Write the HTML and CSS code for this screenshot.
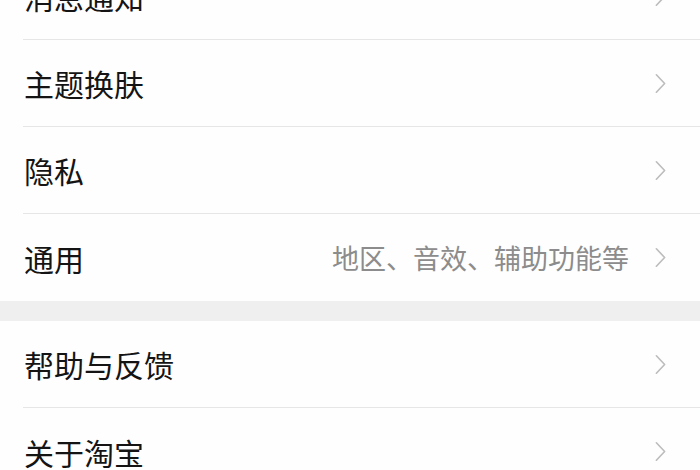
FILE: index.html
```html
<!DOCTYPE html>
<html lang="zh-CN">
<head>
<meta charset="utf-8">
<link rel="stylesheet" href="styles.css">
</head>
<body>
<div class="page">
  <ul class="group">
    <li class="row"><span class="label">消息通知</span><span class="right"><svg class="chev" viewBox="0 0 12 22"><polyline points="1.5,1.5 10.5,11 1.5,20.5"/></svg></span></li>
    <li class="row"><span class="label">主题换肤</span><span class="right"><svg class="chev" viewBox="0 0 12 22"><polyline points="1.5,1.5 10.5,11 1.5,20.5"/></svg></span></li>
    <li class="row"><span class="label">隐私</span><span class="right"><svg class="chev" viewBox="0 0 12 22"><polyline points="1.5,1.5 10.5,11 1.5,20.5"/></svg></span></li>
    <li class="row"><span class="label">通用</span><span class="right"><span class="hint">地区、音效、辅助功能等</span><svg class="chev" viewBox="0 0 12 22"><polyline points="1.5,1.5 10.5,11 1.5,20.5"/></svg></span></li>
  </ul>
  <div class="gap"></div>
  <ul class="group">
    <li class="row"><span class="label">帮助与反馈</span><span class="right"><svg class="chev" viewBox="0 0 12 22"><polyline points="1.5,1.5 10.5,11 1.5,20.5"/></svg></span></li>
    <li class="row"><span class="label">关于淘宝</span><span class="right"><svg class="chev" viewBox="0 0 12 22"><polyline points="1.5,1.5 10.5,11 1.5,20.5"/></svg></span></li>
  </ul>
</div>
</body>
</html>
```

FILE: styles.css
```css
html, body {
  margin: 0;
  padding: 0;
  background: #fefefe;
  overflow: hidden;
}
.page {
  width: 700px;
  margin-top: -47px;
  font-family: "Noto Sans CJK SC", "Noto Sans", sans-serif;
}
.group {
  list-style: none;
  margin: 0;
  padding: 0;
  background: #fefefe;
}
.row {
  display: flex;
  align-items: center;
  justify-content: space-between;
  height: 86px;
  margin-left: 23px;
  padding-right: 34px;
  border-bottom: 1px solid #e6e6e6;
}
.row:last-child {
  border-bottom: none;
  height: 87px;
}
.label {
  font-size: 30px;
  color: #141414;
  padding-left: 1px;
}
.right {
  display: flex;
  align-items: center;
  gap: 26px;
}
.hint {
  font-size: 27px;
  color: #8c8c8c;
}
.chev {
  width: 11px;
  height: 21px;
  fill: none;
  stroke: #bdbdbd;
  stroke-width: 1.8;
  stroke-linecap: round;
  stroke-linejoin: round;
}
.gap {
  height: 20px;
  background: #efefef;
}
```
